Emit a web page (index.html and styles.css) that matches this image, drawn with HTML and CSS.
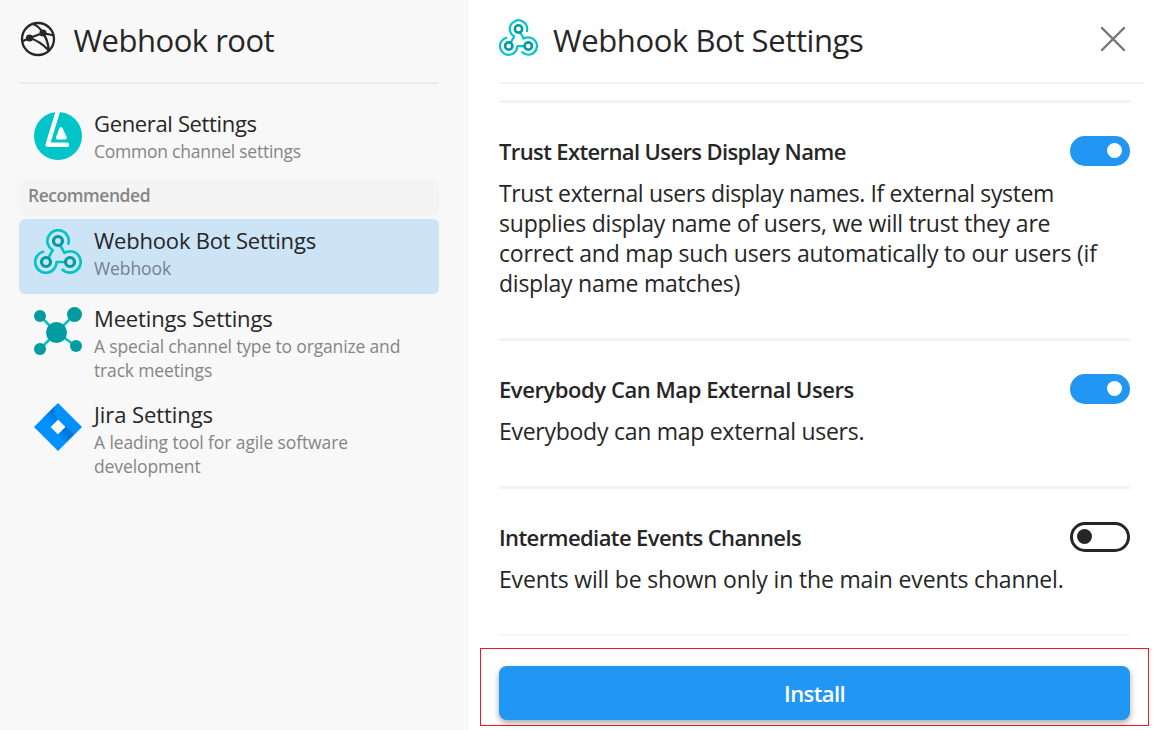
FILE: index.html
```html
<!DOCTYPE html>
<html lang="en">
<head>
<meta charset="utf-8">
<title>Webhook Bot Settings</title>
<link rel="stylesheet" href="styles.css">
</head>
<body>
<svg width="0" height="0" class="defs">
  <symbol id="webhook" viewBox="0 0 48 45">
    <g fill="none" stroke="#00c5c8" stroke-width="2.7" stroke-linecap="round" stroke-linejoin="round">
      <path d="M34.4 14.6A10.7 10.7 0 1 0 18.7 21.2L14.6 28.5"/>
      <path d="M9 22.8A10.7 10.7 0 1 0 22.6 33H31"/>
      <path d="M28.6 40.7A10.7 10.7 0 1 0 30.4 23.9L26.6 17"/>
    </g>
    <g fill="none" stroke="#009c9f" stroke-width="3.2">
      <circle cx="24" cy="12" r="4.5"/><circle cx="12" cy="33" r="4.5"/><circle cx="36" cy="33" r="4.5"/>
    </g>
  </symbol>
</svg>
<div class="app">
  <aside class="sidebar">
    <header class="head">
      <svg class="globe" viewBox="0 0 36 36" fill="none" stroke="#262626" stroke-width="2.3">
        <circle cx="18" cy="18" r="16"/>
        <path d="M2 20.5L9.5 17L23 12M13 3Q19 5 23 12L34 14.5M23 12Q28 19 28.8 29.5M9.5 17Q20 20 28.8 29.5"/>
        <circle cx="9.5" cy="17" r="3.6" fill="#262626" stroke="none"/><circle cx="23" cy="12" r="3.6" fill="#262626" stroke="none"/>
      </svg>
      <h1 class="title title-root">Webhook root</h1>
    </header>
    <div class="item">
      <svg class="icon" viewBox="0 0 48 48">
        <circle cx="24" cy="24" r="24" fill="#00c5c8"/>
        <path d="M24 -1L13.7 32.7H33" fill="none" stroke="#fff" stroke-width="4.4" stroke-linecap="round" stroke-linejoin="round"/>
        <path d="M27 17L23.8 25.7H31Z" fill="#fff" stroke="#fff" stroke-width="3.6" stroke-linejoin="round"/>
      </svg>
      <div><div class="name n1">General Settings</div><div class="sub s1">Common channel settings</div></div>
    </div>
    <div class="group">Recommended</div>
    <div class="item selected">
      <svg class="icon hook"><use href="#webhook"/></svg>
      <div><div class="name n2">Webhook Bot Settings</div><div class="sub s2">Webhook</div></div>
    </div>
    <div class="item tall">
      <svg class="icon" viewBox="0 0 48 48">
        <path d="M6 9L22.5 25.5L40.5 7.5M6 42L22.5 25.5L42 39" fill="none" stroke="#00c5c8" stroke-width="2.6"/>
        <g fill="#009c9f"><circle cx="22.5" cy="25.5" r="10.5"/><circle cx="6" cy="9" r="6"/><circle cx="40.5" cy="7.5" r="7.5"/><circle cx="6" cy="42" r="6"/><circle cx="42" cy="39" r="6"/></g>
      </svg>
      <div><div class="name n3">Meetings Settings</div><div class="sub s3">A special channel type to organize and<br>track meetings</div></div>
    </div>
    <div class="item">
      <svg class="icon" viewBox="0 0 48 48">
        <defs>
          <linearGradient id="ja" gradientUnits="userSpaceOnUse" x1="22" y1="10" x2="14" y2="18"><stop stop-color="#0073d8"/><stop offset="1" stop-color="#0091ff"/></linearGradient>
          <linearGradient id="jb" gradientUnits="userSpaceOnUse" x1="27" y1="38" x2="35" y2="30"><stop stop-color="#0091ff"/><stop offset="1" stop-color="#0073d8"/></linearGradient>
        </defs>
        <path fill="#0091ff" fill-rule="evenodd" d="M24 0L48 24L24 48L0 24ZM24 16.5L16.5 24L24 31.5L31.5 24Z"/>
        <path fill="url(#ja)" d="M24 0L9 15L16.5 24L24 16.5Q18 10 21 3Z"/>
        <path fill="url(#jb)" d="M31.5 24L24 31.5L32 39.5L39.500 32Q37.500 27.500 31.500 24Z"/>
      </svg>
      <div><div class="name n4">Jira Settings</div><div class="sub s4">A leading tool for agile software<br>development</div></div>
    </div>
  </aside>
  <main class="main">
    <header class="head">
      <svg class="head-hook"><use href="#webhook"/></svg>
      <h2 class="title title-bot">Webhook Bot Settings</h2>
      <svg class="close" viewBox="0 0 26 26"><path d="M2 2L24 24M24 2L2 24" stroke="#757575" stroke-width="2.4" stroke-linecap="round"/></svg>
    </header>
    <div class="content">
      <section class="setting first">
        <div class="row"><h3 class="h1">Trust External Users Display Name</h3><span class="toggle on"></span></div>
        <p class="desc"><span class="d1">Trust external users display names. If external system</span><br><span class="d2">supplies display name of users, we will trust they are</span><br><span class="d3">correct and map such users automatically to our users (if</span><br><span class="d4">display name matches)</span></p>
      </section>
      <section class="setting">
        <div class="row"><h3 class="h2">Everybody Can Map External Users</h3><span class="toggle on"></span></div>
        <p class="desc d5">Everybody can map external users.</p>
      </section>
      <section class="setting">
        <div class="row"><h3 class="h3">Intermediate Events Channels</h3><span class="toggle"></span></div>
        <p class="desc d6">Events will be shown only in the main events channel.</p>
      </section>
    </div>
    <div class="footer"><button class="install">Install</button></div>
  </main>
</div>
</body>
</html>
```
FILE: styles.css
```css
* { box-sizing: border-box; }
body { margin: 0; font-family: "Open Sans", "Noto Sans", sans-serif; color: #262626; background: #fff; }
h1, h2, h3, p { margin: 0; font-weight: 400; }
.defs { position: absolute; }
.app { display: flex; width: 1154px; height: 730px; overflow: hidden; white-space: nowrap; }
.sidebar { width: 469px; padding: 0 30px 0 19px; background: #f8f8f8; flex: none; }
.head { display: flex; align-items: center; height: 84px; border-bottom: 2px solid #ebebeb; }
.globe { width: 36px; height: 36px; margin: -5px 17.5px 0 1px; }
.title { font-size: 31px; line-height: 42px; margin-top: -3px; }
.title-root { letter-spacing: -.5px; }
.title-bot { letter-spacing: -.4px; }
.item { display: flex; min-height: 75px; padding: 8px 0 0 15px; border-radius: 6px; }
.sidebar > .head + .item { margin-top: 20px; }
.icon { width: 48px; height: 48px; flex: none; margin-right: 12px; }
.name { font-size: 22px; line-height: 26px; margin-top: -2px; }
.sub { font-size: 17.5px; line-height: 24px; margin-top: 3px; color: #858585; }
.n1 { letter-spacing: -.35px; }
.n2 { letter-spacing: -.2px; }
.n3 { letter-spacing: -.15px; }
.n4 { letter-spacing: -.08px; }
.s1 { letter-spacing: -.24px; }
.s2 { letter-spacing: -.1px; }
.s3 { letter-spacing: -.16px; }
.s4 { letter-spacing: -.11px; }
.group { height: 36px; margin: 1px 0 3px; padding-left: 9px; border-radius: 8px; background: #f4f4f4; color: #858585; font-size: 17.5px; font-weight: 600; line-height: 31px; letter-spacing: -.45px; }
.selected { background: #cde3f6; }
.selected .name { margin-top: 0; }
.selected .sub { color: #75818c; }
.hook { height: 45px; margin-top: 2px; }
.tall { min-height: 96px; margin-top: 5px; }
.main { flex: 1; display: flex; flex-direction: column; padding-left: 30px; }
.main .head { width: 645px; border-color: #f3f3f3; flex: none; }
.head-hook { width: 39px; height: 37px; margin: -7px 15px 0 0; }
.close { width: 26px; height: 26px; margin: -5px 18.5px 0 auto; }
.content { width: 631px; height: 552px; padding-top: 16px; overflow: hidden; border-bottom: 2px solid #f6f6f6; }
.setting { border-top: 3px solid #f3f3f3; height: 148px; padding-top: 33px; }
.first { height: 238px; }
.row { display: flex; justify-content: space-between; align-items: center; height: 30px; }
.row h3 { font-size: 22px; font-weight: 600; line-height: 30px; }
.row .h1 { letter-spacing: -.62px; }
.row .h2 { letter-spacing: -.44px; }
.row .h3 { letter-spacing: -.6px; }
.toggle { width: 60px; height: 30px; border: 3px solid #262626; border-radius: 15px; padding: 4px; display: flex; }
.toggle::before { content: ""; width: 15px; height: 15px; border-radius: 50%; background: #262626; }
.toggle.on { justify-content: flex-end; background: #2196f3; border-color: #2196f3; padding-right: 5px; }
.toggle.on::before { background: #fff; }
.desc { font-size: 23px; line-height: 30px; margin-top: 12px; }
.d1 { letter-spacing: -.37px; }
.d2 { letter-spacing: -.22px; }
.d3 { letter-spacing: -.2px; }
.d4 { letter-spacing: -.24px; }
.d5 { letter-spacing: -.27px; }
.d6 { letter-spacing: -.16px; }
.footer { width: 669px; height: 78px; margin: 12px 0 0 -19px; padding: 17px 18px 6px; border: 1px solid #ed1c24; flex: none; }
.install { display: block; width: 100%; height: 54px; border: 0; border-radius: 8px; background: #2196f3; color: #fff; font: 600 22px "Open Sans", sans-serif; letter-spacing: -.6px; box-shadow: 0 3px 6px rgba(0,0,0,.35); }
```
